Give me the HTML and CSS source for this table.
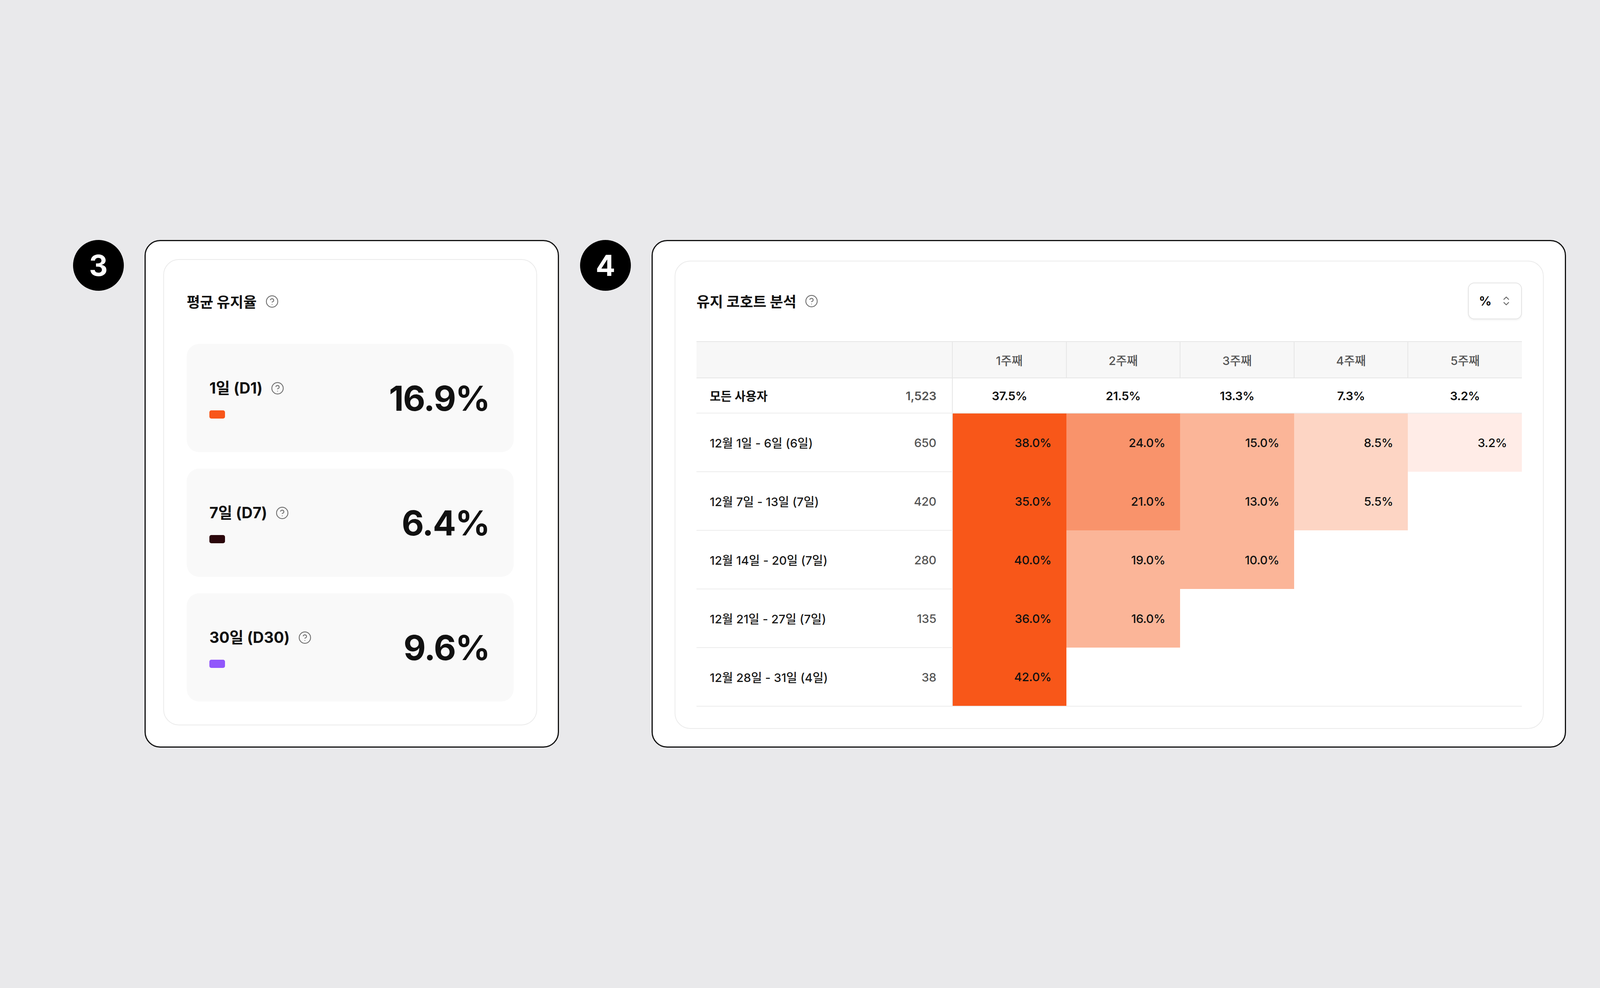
FILE: index.html
```html
<!DOCTYPE html>
<html lang="ko">
<head>
<meta charset="utf-8">
<title>Retention</title>
<link rel="stylesheet" href="styles.css">
</head>
<body>
<div class="stage">
  <div class="group">
    <div class="badge">3</div>
    <section class="frame frame-left">
      <div class="panel panel-left">
        <div class="panel-head">
          <h2 class="title">평균 유지율</h2>
          <svg class="help" viewBox="0 0 24 24"><circle cx="12" cy="12" r="10"/><path d="M9.1 9a3 3 0 0 1 5.8 1c0 2-3 3-3 3"/><path d="M12 17h.01"/></svg>
        </div>
        <div class="metrics">
          <div class="metric">
            <div class="metric-info">
              <div class="metric-label"><span>1일 (D1)</span><svg class="help" viewBox="0 0 24 24"><circle cx="12" cy="12" r="10"/><path d="M9.1 9a3 3 0 0 1 5.8 1c0 2-3 3-3 3"/><path d="M12 17h.01"/></svg></div>
              <span class="swatch swatch-d1"></span>
            </div>
            <div class="metric-value">16.9%</div>
          </div>
          <div class="metric">
            <div class="metric-info">
              <div class="metric-label"><span>7일 (D7)</span><svg class="help" viewBox="0 0 24 24"><circle cx="12" cy="12" r="10"/><path d="M9.1 9a3 3 0 0 1 5.8 1c0 2-3 3-3 3"/><path d="M12 17h.01"/></svg></div>
              <span class="swatch swatch-d7"></span>
            </div>
            <div class="metric-value">6.4%</div>
          </div>
          <div class="metric">
            <div class="metric-info">
              <div class="metric-label"><span>30일 (D30)</span><svg class="help" viewBox="0 0 24 24"><circle cx="12" cy="12" r="10"/><path d="M9.1 9a3 3 0 0 1 5.8 1c0 2-3 3-3 3"/><path d="M12 17h.01"/></svg></div>
              <span class="swatch swatch-d30"></span>
            </div>
            <div class="metric-value">9.6%</div>
          </div>
        </div>
      </div>
    </section>
  </div>

  <div class="group">
    <div class="badge">4</div>
    <section class="frame frame-right">
      <div class="panel panel-right">
        <div class="panel-head between">
          <div class="title-wrap">
            <h2 class="title">유지 코호트 분석</h2>
            <svg class="help" viewBox="0 0 24 24"><circle cx="12" cy="12" r="10"/><path d="M9.1 9a3 3 0 0 1 5.8 1c0 2-3 3-3 3"/><path d="M12 17h.01"/></svg>
          </div>
          <div class="select">
            <span class="select-value">%</span>
            <svg class="chev" viewBox="0 0 18 28"><path d="M3 10 L9 4 L15 10"/><path d="M3 18 L9 24 L15 18"/></svg>
          </div>
        </div>
        <table class="cohort">
          <colgroup>
            <col class="col-label"><col class="col-count">
            <col class="col-week"><col class="col-week"><col class="col-week"><col class="col-week"><col class="col-week">
          </colgroup>
          <thead>
            <tr>
              <th colspan="2" class="th-label"></th>
              <th class="th-week">1주째</th>
              <th class="th-week">2주째</th>
              <th class="th-week">3주째</th>
              <th class="th-week">4주째</th>
              <th class="th-week">5주째</th>
            </tr>
          </thead>
          <tbody>
            <tr class="row-all">
              <td class="c-label">모든 사용자</td>
              <td class="c-count">1,523</td>
              <td class="c-avg">37.5%</td>
              <td class="c-avg">21.5%</td>
              <td class="c-avg">13.3%</td>
              <td class="c-avg">7.3%</td>
              <td class="c-avg">3.2%</td>
            </tr>
            <tr class="row-data">
              <td class="c-label">12월 1일 - 6일 (6일)</td>
              <td class="c-count">650</td>
              <td class="c-val lv5">38.0%</td>
              <td class="c-val lv4">24.0%</td>
              <td class="c-val lv3">15.0%</td>
              <td class="c-val lv2">8.5%</td>
              <td class="c-val lv1">3.2%</td>
            </tr>
            <tr class="row-data">
              <td class="c-label">12월 7일 - 13일 (7일)</td>
              <td class="c-count">420</td>
              <td class="c-val lv5">35.0%</td>
              <td class="c-val lv4">21.0%</td>
              <td class="c-val lv3">13.0%</td>
              <td class="c-val lv2">5.5%</td>
              <td class="c-val"></td>
            </tr>
            <tr class="row-data">
              <td class="c-label">12월 14일 - 20일 (7일)</td>
              <td class="c-count">280</td>
              <td class="c-val lv5">40.0%</td>
              <td class="c-val lv3">19.0%</td>
              <td class="c-val lv3">10.0%</td>
              <td class="c-val"></td>
              <td class="c-val"></td>
            </tr>
            <tr class="row-data">
              <td class="c-label">12월 21일 - 27일 (7일)</td>
              <td class="c-count">135</td>
              <td class="c-val lv5">36.0%</td>
              <td class="c-val lv3">16.0%</td>
              <td class="c-val"></td>
              <td class="c-val"></td>
              <td class="c-val"></td>
            </tr>
            <tr class="row-data row-last">
              <td class="c-label">12월 28일 - 31일 (4일)</td>
              <td class="c-count">38</td>
              <td class="c-val lv5">42.0%</td>
              <td class="c-val"></td>
              <td class="c-val"></td>
              <td class="c-val"></td>
              <td class="c-val"></td>
            </tr>
          </tbody>
        </table>
      </div>
    </section>
  </div>
</div>
</body>
</html>
```

FILE: styles.css
```css
* { box-sizing: border-box; }

html, body {
  margin: 0;
  padding: 0;
}

body {
  width: 4200px;
  height: 2528px;
  overflow: hidden;
  background: #e9e9eb;
  font-family: Inter, "Noto Sans CJK KR", "Noto Sans", sans-serif;
  color: #111;
}

.stage {
  display: flex;
  align-items: flex-start;
  gap: 54px;
  padding: 614px 0 0 187px;
}

.group {
  display: flex;
  align-items: flex-start;
  gap: 53px;
}

.badge {
  width: 130px;
  height: 130px;
  border-radius: 50%;
  background: #000;
  color: #fff;
  display: flex;
  align-items: center;
  justify-content: center;
  font-size: 74px;
  font-weight: 700;
  line-height: 1;
}

.frame {
  background: #fff;
  border: 3px solid #111;
  border-radius: 40px;
  height: 1299px;
  display: flex;
}

.frame-left {
  width: 1061px;
  padding: 46px 53px 54px 45px;
}

.frame-right {
  width: 2341px;
  padding: 50px 54px 45px 56px;
}

.panel {
  flex: 1;
  border: 2px solid #ebebeb;
  border-radius: 40px;
  background: #fff;
  display: flex;
  flex-direction: column;
}

.panel-left {
  padding: 58px;
}

.panel-right {
  padding: 54px;
}

.panel-head {
  height: 96px;
  display: flex;
  align-items: center;
  gap: 22px;
}

.panel-right .panel-head {
  height: 94px;
}

.between {
  justify-content: space-between;
}

.title-wrap {
  display: flex;
  align-items: center;
  gap: 21px;
}

.title {
  margin: 0;
  font-size: 37px;
  font-weight: 700;
  color: #111;
}

.help {
  width: 35px;
  height: 35px;
  fill: none;
  stroke: #6f6f6f;
  stroke-width: 1.5;
  stroke-linecap: round;
  stroke-linejoin: round;
  flex: none;
}

.metrics {
  margin-top: 61px;
  display: flex;
  flex-direction: column;
  gap: 42px;
}

.metric {
  height: 277px;
  background: #f9f9f9;
  border-radius: 32px;
  padding: 0 62px 0 58px;
  display: flex;
  align-items: center;
  justify-content: space-between;
}

.metric-info {
  display: flex;
  flex-direction: column;
  gap: 34px;
  padding-top: 4px;
}

.metric-label {
  display: flex;
  align-items: center;
  gap: 21px;
  font-size: 39px;
  font-weight: 700;
  line-height: 46px;
}

.swatch {
  width: 40px;
  height: 21px;
  border-radius: 5px;
}

.swatch-d1 { background: #f8561a; }
.swatch-d7 { background: #2b070c; }
.swatch-d30 { background: #9157fb; }

.metric-value {
  font-size: 88px;
  font-weight: 700;
  letter-spacing: -2px;
  line-height: 1;
}

.select {
  width: 138px;
  height: 94px;
  border: 2px solid #e4e4e4;
  border-radius: 16px;
  box-shadow: 0 3px 4px rgba(0, 0, 0, 0.05);
  display: flex;
  align-items: center;
  padding-left: 26px;
  gap: 28px;
}

.select-value {
  font-size: 32px;
  font-weight: 700;
}

.chev {
  width: 18px;
  height: 28px;
  fill: none;
  stroke: #6a6a6a;
  stroke-width: 2.4;
  stroke-linecap: round;
  stroke-linejoin: round;
}

.cohort {
  margin-top: 56px;
  width: 2113px;
  table-layout: fixed;
  border-collapse: collapse;
  font-size: 30.5px;
}

.col-label { width: 480px; }
.col-count { width: 175px; }
.col-week { width: 291.6px; }

.cohort th,
.cohort td {
  padding: 0;
}

.cohort thead th {
  height: 93px;
  background: #f7f7f7;
  border-top: 2px solid #e6e6e6;
  border-bottom: 2px solid #e6e6e6;
  font-weight: 500;
  color: #555;
  text-align: center;
}

.cohort .th-week {
  border-left: 2px solid #e6e6e6;
}

.row-all td {
  height: 90px;
  border-bottom: 2px solid #ececec;
  font-weight: 600;
}

.row-data td {
  height: 150px;
  font-weight: 500;
}

.c-label {
  padding-left: 34px !important;
  color: #1a1a1a;
  white-space: nowrap;
}

.c-count {
  text-align: right;
  padding-right: 40px !important;
  color: #555;
  font-weight: 500;
  border-right: 2px solid #e6e6e6;
  letter-spacing: -0.3px;
}

.row-all .c-label { font-weight: 600; color: #111; }

.row-data .c-label,
.row-data .c-count {
  border-bottom: 2px solid #ececec;
}

.row-last td {
  border-bottom: 2px solid #ececec;
}

.c-avg {
  text-align: center;
  color: #111;
  letter-spacing: -0.4px;
}

.c-val {
  text-align: right;
  padding-right: 38px !important;
  color: #111;
  letter-spacing: -0.4px;
}

.lv5 { background: #f85719; }
.lv4 { background: #f9936b; }
.lv3 { background: #fbb598; }
.lv2 { background: #fdd5c4; }
.lv1 { background: #ffece7; }
```
